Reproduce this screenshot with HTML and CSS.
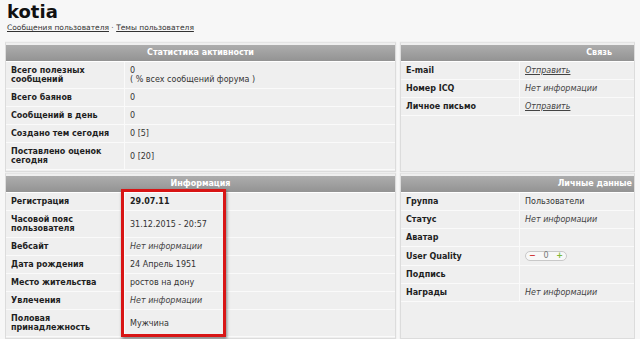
FILE: index.html
```html
<!DOCTYPE html>
<html lang="ru">

<head>
    <meta charset="UTF-8">
    <title>kotia</title>
    <link rel="stylesheet" href="styles.css">
</head>

<body>

    <h1 class="user-name">kotia</h1>
    <div class="user-links">
        <a href="#">Сообщения пользователя</a> &middot; <a href="#">Темы пользователя</a>
    </div>

    <div class="profile">
        <!-- Статистика -->
        <div class="panel">
            <div class="panel-head">Статистика активности</div>
            <table class="panel-table">
                <tr>
                    <td class="label">Всего полезных сообщений</td>
                    <td class="value">0<br>( % всех сообщений форума )</td>
                </tr>
                <tr>
                    <td class="label">Всего баянов</td>
                    <td class="value">0</td>
                </tr>
                <tr>
                    <td class="label">Сообщений в день</td>
                    <td class="value">0</td>
                </tr>
                <tr>
                    <td class="label">Создано тем сегодня</td>
                    <td class="value">0 [5]</td>
                </tr>
                <tr>
                    <td class="label">Поставлено оценок сегодня</td>
                    <td class="value">0 [20]</td>
                </tr>
            </table>
        </div>

        <!-- Связь -->
        <div class="panel">
            <div class="panel-head head-contact">Связь</div>
            <table class="panel-table">
                <tr>
                    <td class="label">E-mail</td>
                    <td class="value"><a href="#" class="send">Отправить</a></td>
                </tr>
                <tr>
                    <td class="label">Номер ICQ</td>
                    <td class="value empty">Нет информации</td>
                </tr>
                <tr>
                    <td class="label">Личное письмо</td>
                    <td class="value"><a href="#" class="send">Отправить</a></td>
                </tr>
            </table>
        </div>

        <!-- Информация -->
        <div class="panel info">
            <div class="panel-head">Информация</div>
            <table class="panel-table">
                <tr>
                    <td class="label">Регистрация</td>
                    <td class="value strong">29.07.11</td>
                </tr>
                <tr>
                    <td class="label">Часовой пояс пользователя</td>
                    <td class="value">31.12.2015 - 20:57</td>
                </tr>
                <tr>
                    <td class="label">Вебсайт</td>
                    <td class="value empty">Нет информации</td>
                </tr>
                <tr>
                    <td class="label">Дата рождения</td>
                    <td class="value">24 Апрель 1951</td>
                </tr>
                <tr>
                    <td class="label">Место жительства</td>
                    <td class="value">ростов на дону</td>
                </tr>
                <tr>
                    <td class="label">Увлечения</td>
                    <td class="value empty">Нет информации</td>
                </tr>
                <tr>
                    <td class="label">Половая принадлежность</td>
                    <td class="value">Мужчина</td>
                </tr>
            </table>
            <div class="highlight"></div>
        </div>

        <!-- Личные данные -->
        <div class="panel">
            <div class="panel-head head-personal">Личные данные</div>
            <table class="panel-table">
                <tr>
                    <td class="label">Группа</td>
                    <td class="value">Пользователи</td>
                </tr>
                <tr>
                    <td class="label">Статус</td>
                    <td class="value empty">Нет информации</td>
                </tr>
                <tr>
                    <td class="label">Аватар</td>
                    <td class="value"></td>
                </tr>
                <tr>
                    <td class="label">User Quality</td>
                    <td class="value">
                        <span class="rating">
                            <span class="minus">&minus;</span>
                            <span class="score">0</span>
                            <span class="plus">+</span>
                        </span>
                    </td>
                </tr>
                <tr>
                    <td class="label">Подпись</td>
                    <td class="value"></td>
                </tr>
                <tr>
                    <td class="label">Награды</td>
                    <td class="value empty">Нет информации</td>
                </tr>
            </table>
        </div>
    </div>

</body>

</html>
```

FILE: styles.css
```css
body {
    font-family: "DejaVu Sans", Verdana, sans-serif;
    margin: 0 5px;
    background-color: #f7f7f7;
    color: #222;
    overflow: hidden;
}

a {
    color: #333;
}

/* Заголовок профиля */
.user-name {
    font-size: 18px;
    font-weight: bold;
    line-height: 22px;
    margin: 1px 0 0 2px;
    color: #111;
}

.user-links {
    font-size: 7.5px;
    line-height: 10px;
    margin: 0 0 9px 2px;
    color: #555;
}

/* Сетка панелей */
.profile {
    display: grid;
    grid-template-columns: 391px 1fr;
    column-gap: 4px;
    row-gap: 1px;
}

.panel {
    position: relative;
    background-color: #efefef;
    border: 1px solid #dcdcdc;
    border-top-color: #e4e4e4;
    padding: 2px 0 1px 0;
    box-shadow: 0 0 1px #ddd;
}

.panel-head {
    height: 16px;
    line-height: 16px;
    background: linear-gradient(#adadad, #939393);
    color: #fff;
    font-size: 8px;
    font-weight: bold;
    text-align: center;
    white-space: nowrap;
    border-bottom: 1px solid #fff;
}

.panel-head.head-contact {
    text-align: right;
    padding-right: 22px;
}

.panel-head.head-personal {
    text-align: right;
    padding-right: 2px;
}

.panel-table {
    width: 100%;
    border-collapse: collapse;
    font-size: 8px;
    line-height: 9px;
}

.panel-table td {
    padding: 4px 5px;
    border-bottom: 1px solid #fafafa;
    vertical-align: middle;
    height: 9px;
}

.panel-table .label {
    width: 108px;
    font-weight: bold;
    color: #1e1e1e;
    border-right: 1px solid #fafafa;
}

.panel-table .value {
    color: #333;
    white-space: nowrap;
}

.value.strong {
    font-weight: bold;
    color: #222;
}

.value.empty {
    font-style: italic;
    color: #444;
}

.send {
    font-style: italic;
    color: #444;
}

/* User Quality */
.rating {
    display: inline-flex;
    align-items: center;
    justify-content: space-between;
    width: 34px;
    height: 8px;
    padding: 0 3px;
    border: 1px solid #c8c8c8;
    border-radius: 5px;
    background-color: #f8f8f8;
    font-size: 8px;
    line-height: 8px;
    vertical-align: middle;
}

.rating .minus {
    color: #d23a3a;
    font-weight: bold;
}

.rating .score {
    color: #777;
}

.rating .plus {
    color: #7cb83a;
    font-weight: bold;
}

/* Красная рамка поверх блока */
.highlight {
    position: absolute;
    left: 115px;
    top: 15px;
    width: 99px;
    height: 142px;
    border: 3px solid #d81515;
    box-shadow: 1px 2px 3px rgba(0, 0, 0, 0.45);
    pointer-events: none;
}
```
